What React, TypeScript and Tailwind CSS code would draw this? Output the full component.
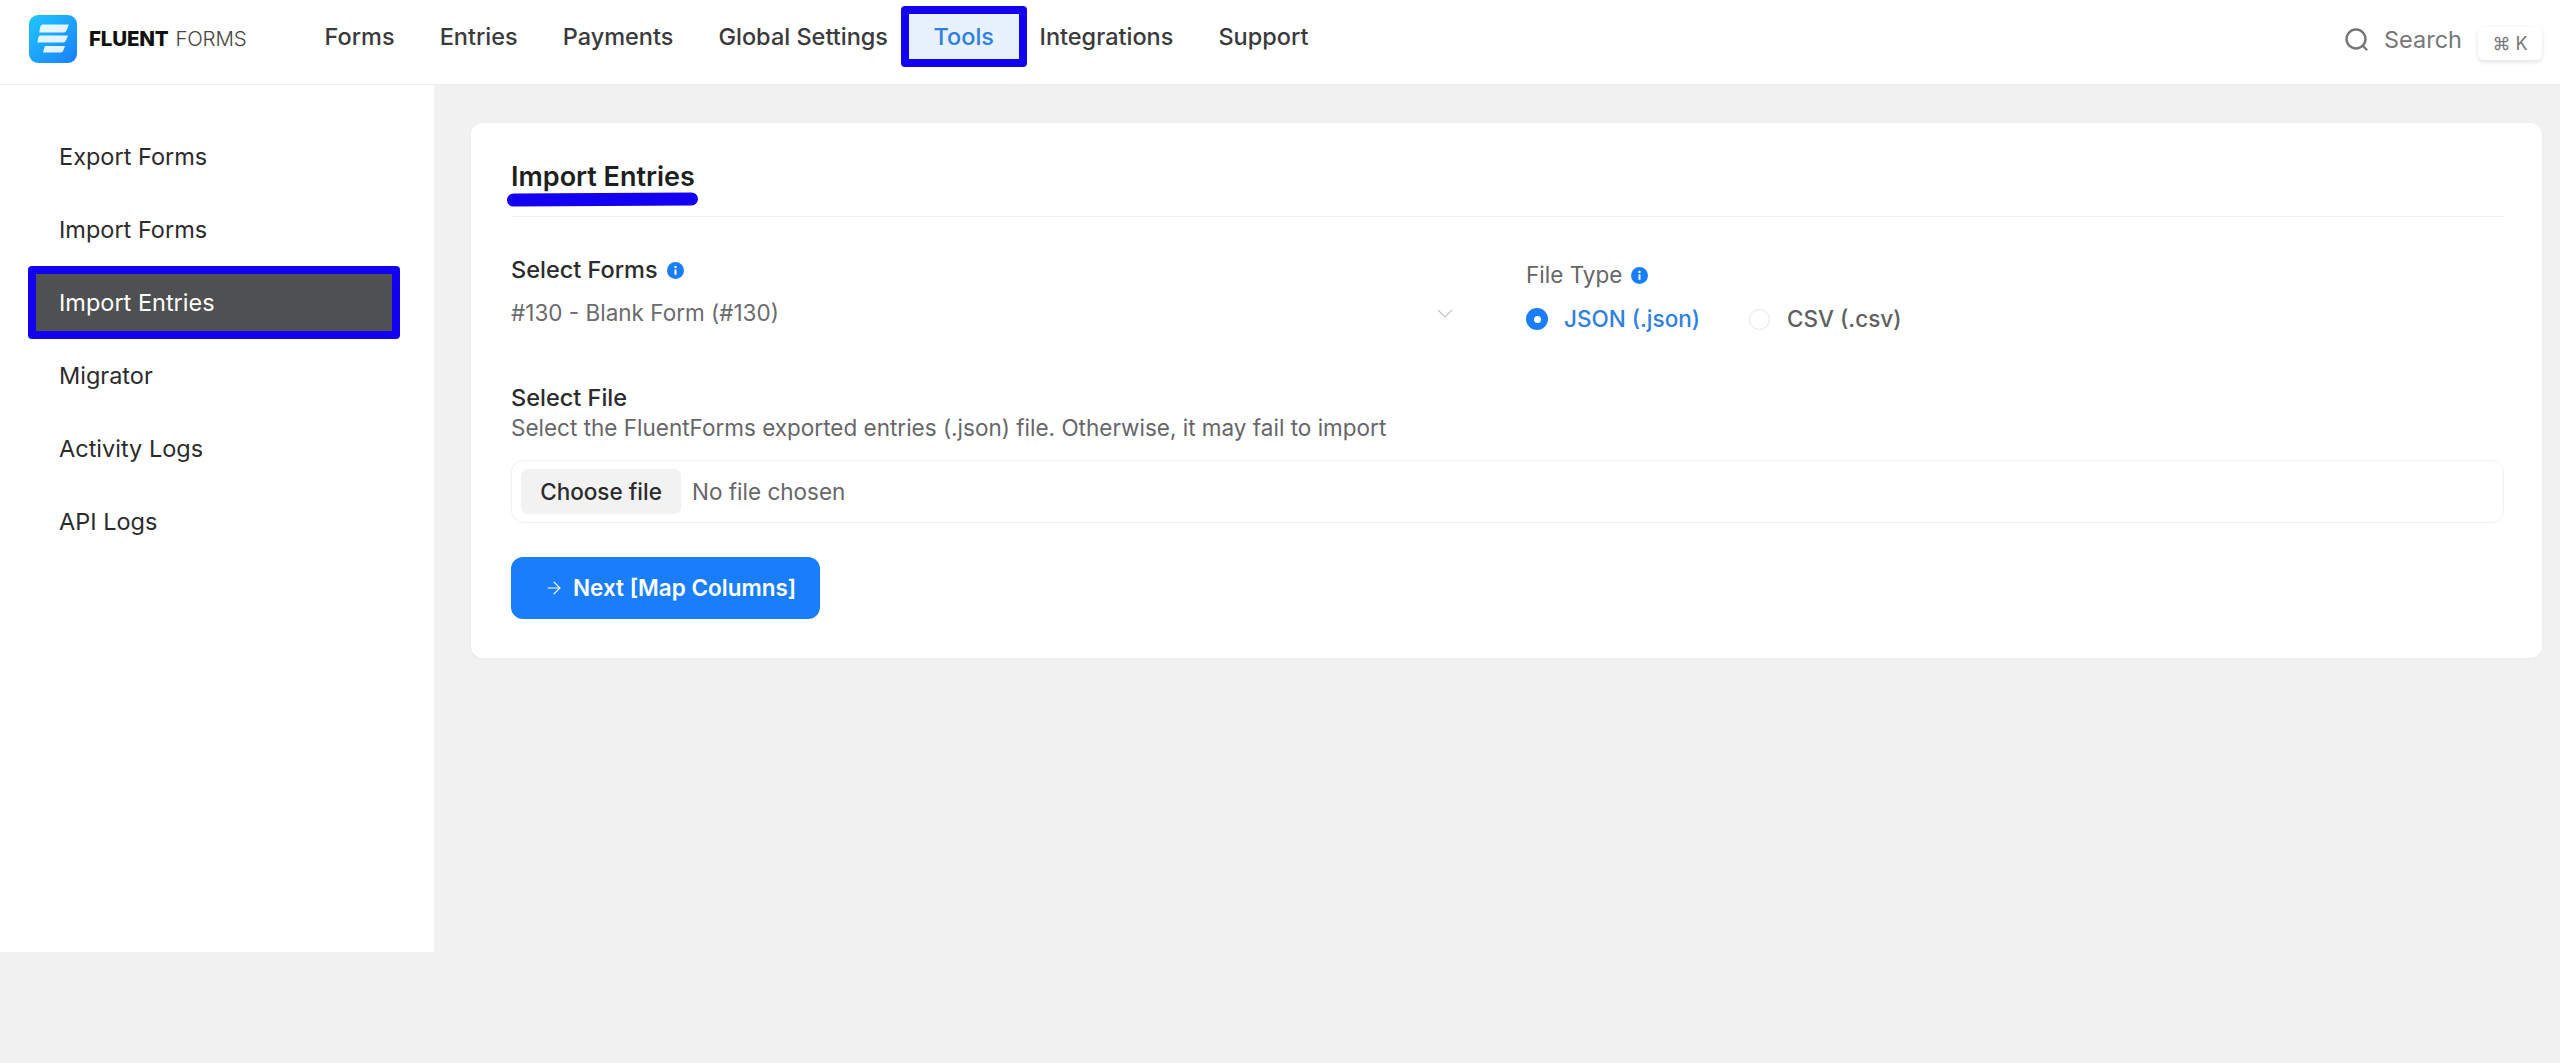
import { ArrowRight } from 'lucide-react'

const navItems = ['Forms', 'Entries', 'Payments', 'Global Settings', 'Tools', 'Integrations', 'Support']
const sideItems = ['Export Forms', 'Import Forms', 'Import Entries', 'Migrator', 'Activity Logs', 'API Logs']

function Logo() {
  return (
    <svg width="48" height="48" viewBox="0 0 48 48" className="shrink-0">
      <defs>
        <linearGradient id="logoFill" x1="0" y1="0" x2="1" y2="1">
          <stop offset="0" stopColor="#1fc8ff" />
          <stop offset="1" stopColor="#1a7efb" />
        </linearGradient>
      </defs>
      <rect width="48" height="48" rx="9" fill="url(#logoFill)" />
      <path d="M13.5 9.5H40L37.5 15.5Q36.8 17.5 34.5 17.5H10.2L11 13Q11.7 9.5 13.5 9.5Z" fill="#fff" fillOpacity="0.88" />
      <path d="M11 20.5H39L37 25.5Q36.3 27.5 34 27.5H8.5L9 24Q9.5 20.5 11 20.5Z" fill="#fff" fillOpacity="0.88" />
      <path d="M16.5 31H36L34.5 35Q33.8 37.5 31.5 37.5H14L15 33.5Q15.5 31 16.5 31Z" fill="#fff" fillOpacity="0.88" />
    </svg>
  )
}

function InfoDot() {
  return (
    <svg width="17" height="17" viewBox="0 0 17 17" className="shrink-0">
      <circle cx="8.5" cy="8.5" r="8.5" fill="#1a7efb" />
      <rect x="7.5" y="7.2" width="2" height="5.6" rx="0.5" fill="#fff" />
      <circle cx="8.5" cy="4.9" r="1.2" fill="#fff" />
    </svg>
  )
}

function Header() {
  return (
    <header className="flex h-[85px] items-start border-b border-[#ececec] bg-white">
      <div className="ml-[29px] mt-[15px] flex items-center">
        <Logo />
        <div className="ml-[12px] flex w-[170px] gap-[7px] text-[20.5px] leading-[48px] tracking-[-0.2px]">
          <span className="font-extrabold text-[#111]">FLUENT</span>
          <span className="font-light text-[#444]">FORMS</span>
        </div>
      </div>
      <nav className="ml-[43px] mt-[6px] flex">
        {navItems.map((item) => (
          <a
            key={item}
            className={
              item === 'Tools'
                ? '-mx-[10px] flex h-[61px] items-center rounded-[4px] border-8 border-[#1400f0] bg-[#e8f1fe] px-[25px] text-[#2f80e0]'
                : 'flex h-[61px] items-center border-8 border-transparent px-[14.5px] text-[#3a3a3c]'
            }
          >
            <span className="text-[23.5px] font-medium">{item}</span>
          </a>
        ))}
      </nav>
      <div className="ml-auto mr-[18px] mt-[27px] flex items-start">
        <svg width="24" height="24" viewBox="0 0 24 24" fill="none" stroke="#77777a" strokeWidth="2.4" strokeLinecap="round" className="mt-[1px]">
          <circle cx="11" cy="11" r="9.5" />
          <path d="M18 18L21.5 21.5" />
        </svg>
        <span className="ml-[15px] text-[23.5px] leading-[26px] text-[#77777a]">Search</span>
        <span className="ml-[16px] flex h-[33px] w-[64px] items-center justify-center rounded-[6px] bg-white text-[18px] text-[#77777a] shadow-[0_2px_5px_rgba(0,0,0,0.12)]">
          ⌘ K
        </span>
      </div>
    </header>
  )
}

function Sidebar() {
  return (
    <aside className="h-[867px] w-[434px] shrink-0 bg-white pl-[28px] pt-[35px]">
      {sideItems.map((item) => (
        <a
          key={item}
          className={
            item === 'Import Entries'
              ? 'flex h-[73px] w-[372px] items-center rounded-[4px] border-8 border-[#1400f0] bg-[#4f5052] pl-[23px] text-[23.5px] text-white'
              : 'flex h-[73px] w-[372px] items-center border-8 border-transparent pl-[23px] text-[23.5px] text-[#2b2b2d]'
          }
        >
          {item}
        </a>
      ))}
    </aside>
  )
}

function ImportCard() {
  return (
    <section className="rounded-[12px] bg-white pb-[39px] pl-[40px] pr-[38px] pt-[36px] shadow-[0_1px_3px_rgba(0,0,0,0.04)]">
      <div className="relative border-b border-[#f0f0f0] pb-[21px]">
        <h1 className="text-[27px] font-semibold leading-[36px] text-[#1e1f21]">Import Entries</h1>
        {/* marker stroke lying over the heading's underside */}
        <span className="absolute -left-[4px] top-[34px] h-[13px] w-[191px] -rotate-[0.4deg] rounded-full bg-[#1400f0]" />
      </div>

      <div className="mt-[38px] flex">
        <div className="w-[1015px] shrink-0">
          <div className="flex items-center gap-[9px] text-[23.5px] font-medium leading-[30px] text-[#2b2b2d]">
            Select Forms
            <InfoDot />
          </div>
          <div className="mt-[13px] flex items-center justify-between pr-[73px] text-[22.5px] leading-[30px] text-[#6b6b6e]">
            #130 - Blank Form (#130)
            <svg width="16" height="9" viewBox="0 0 16 9" fill="none" stroke="#c4c4c6" strokeWidth="1.2">
              <path d="M1 1L8 8L15 1" />
            </svg>
          </div>
        </div>
        <div className="mt-[5px]">
          <div className="flex items-center gap-[9px] text-[22.5px] leading-[30px] text-[#66666a]">
            File Type
            <InfoDot />
          </div>
          <div className="mt-[14px] flex items-center text-[22.5px] font-medium leading-[30px]">
            <span className="flex h-[22px] w-[22px] items-center justify-center rounded-full bg-[#1a7efb]">
              <span className="h-[7px] w-[7px] rounded-full bg-white" />
            </span>
            <span className="ml-[16px] text-[#2f80e0]">JSON (.json)</span>
            <span className="ml-[49px] h-[21px] w-[21px] rounded-full border border-[#e6e6e6]" />
            <span className="ml-[17px] text-[#5f5f62]">CSV (.csv)</span>
          </div>
        </div>
      </div>

      <div className="mt-[49px] text-[23.5px] font-medium leading-[30px] text-[#2b2b2d]">Select File</div>
      <p className="text-[22.5px] leading-[30px] text-[#66666a]">
        Select the FluentForms exported entries (.json) file. Otherwise, it may fail to import
      </p>
      <div className="mt-[17px] flex h-[63px] items-center rounded-[12px] border border-[#f1f1f1] pl-[9px]">
        <span className="flex h-[45px] w-[160px] items-center justify-center rounded-[7px] bg-[#f2f2f2] text-[22.5px] font-medium text-[#2b2b2d]">
          Choose file
        </span>
        <span className="ml-[11px] text-[22.5px] text-[#66666a]">No file chosen</span>
      </div>
      <button className="mt-[34px] flex h-[62px] w-[309px] items-center rounded-[12px] bg-[#1a7efb] pl-[33px] text-[22.5px] font-semibold text-white">
        <ArrowRight size={20} strokeWidth={1.4} />
        <span className="ml-[9px]">Next [Map Columns]</span>
      </button>
    </section>
  )
}

export default function App() {
  return (
    <div className="min-h-[1063px] bg-[#f1f1f1] font-['Inter',sans-serif]">
      <Header />
      <div className="flex">
        <Sidebar />
        <main className="flex-1 pl-[37px] pr-[18px] pt-[38px]">
          <ImportCard />
        </main>
      </div>
    </div>
  )
}
